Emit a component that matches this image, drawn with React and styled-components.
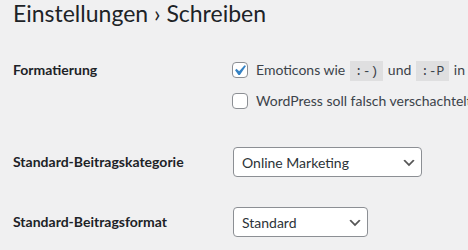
import styled, { createGlobalStyle } from 'styled-components';

const Global = createGlobalStyle`
  html, body {
    margin: 0;
    overflow: hidden;
    background: #f0f0f1;
  }
  body {
    color: #3c434a;
    font-family: Lato, "Liberation Sans", sans-serif;
    font-size: 14px;
  }
`;

const Wrap = styled.div`
  padding-left: 13px;
  width: 900px;
`;

const Title = styled.h1`
  margin: 0;
  font-size: 23px;
  font-weight: 400;
  line-height: 26px;
  color: #1d2327;
`;

const FormTable = styled.div`
  display: flex;
  flex-direction: column;
  margin-top: 34px;
`;

const FormRow = styled.div`
  display: grid;
  grid-template-columns: 219px 1fr;
  align-items: ${({ $center }) => ($center ? 'center' : 'start')};
  margin-top: ${({ $gap }) => $gap || 0}px;
`;

const Label = styled.div`
  font-weight: 700;
  line-height: 20px;
  color: #1d2327;
`;

const Fieldset = styled.div`
  display: flex;
  flex-direction: column;
  gap: 11px;
`;

const CheckRow = styled.label`
  display: flex;
  align-items: center;
  gap: 8px;
  height: 20px;
  line-height: 20px;
  white-space: nowrap;
`;

const Box = styled.span`
  position: relative;
  flex: none;
  width: 14px;
  height: 14px;
  border: 1px solid #8c8f94;
  border-radius: 4px;
  background: #fff;

  svg {
    position: absolute;
    left: -4px;
    top: -3px;
  }
`;

const Code = styled.code`
  display: inline-block;
  margin: 0 1px;
  padding: 3px 5px 2px;
  background: rgba(0, 0, 0, 0.07);
  font-family: "Liberation Mono", monospace;
  font-size: 13px;
  line-height: 15px;
  color: #3c434a;
`;

const Select = styled.div`
  display: flex;
  align-items: center;
  box-sizing: border-box;
  width: ${({ $w }) => $w}px;
  height: 30px;
  margin-left: 1px;
  padding-left: 8px;
  border: 1px solid #8c8f94;
  border-radius: 4px;
  background: #fff;
  color: #2c3338;

  svg {
    margin-left: auto;
    margin-right: 4px;
    margin-top: 1px;
  }
`;

const Checkbox = ({ checked }) => (
  <Box>
    {checked && (
      <svg width="21" height="21" viewBox="0 0 20 20">
        <path fill="#3582c4" d="M14.83 4.89l1.34.94-5.81 8.38H9.02L5.78 9.67l1.34-1.25 2.57 2.4z" />
      </svg>
    )}
  </Box>
);

const Chevron = () => (
  <svg width="16" height="16" viewBox="0 0 20 20">
    <path fill="#555" d="M5 6l5 5 5-5 2 1-7 7-7-7 2-1z" />
  </svg>
);

export default function App() {
  return (
    <>
      <Global />
      <Wrap>
        <Title>Einstellungen › Schreiben</Title>
        <FormTable>
          <FormRow>
            <Label>Formatierung</Label>
            <Fieldset>
              <CheckRow>
                <Checkbox checked />
                <span>
                  Emoticons wie <Code>:-)</Code> und <Code>:-P</Code> in Grafiken umwandeln
                </span>
              </CheckRow>
              <CheckRow>
                <Checkbox />
                <span>WordPress soll falsch verschachteltes XHTML automatisch korrigieren</span>
              </CheckRow>
            </Fieldset>
          </FormRow>
          <FormRow $center $gap={36}>
            <Label>Standard-Beitragskategorie</Label>
            <Select $w={189}>
              Online Marketing
              <Chevron />
            </Select>
          </FormRow>
          <FormRow $center $gap={30}>
            <Label>Standard-Beitragsformat</Label>
            <Select $w={135}>
              Standard
              <Chevron />
            </Select>
          </FormRow>
        </FormTable>
      </Wrap>
    </>
  );
}
